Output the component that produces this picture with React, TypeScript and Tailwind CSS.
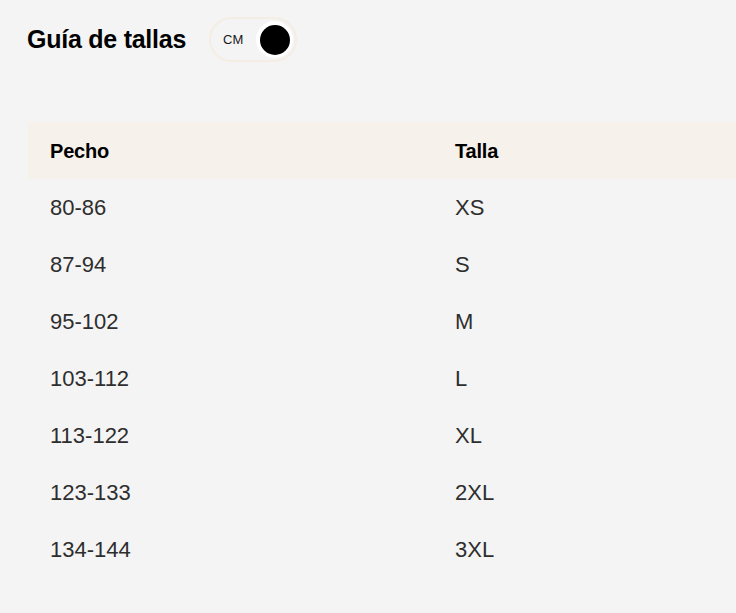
import React from "react";

const rows: [string, string][] = [
  ["80-86", "XS"],
  ["87-94", "S"],
  ["95-102", "M"],
  ["103-112", "L"],
  ["113-122", "XL"],
  ["123-133", "2XL"],
  ["134-144", "3XL"],
];

export default function App() {
  return (
    <div
      className="w-[736px] h-[613px] overflow-hidden bg-[#f4f4f4] pl-[27px] pt-[17px]"
      style={{ fontFamily: '"Liberation Sans", Arial, sans-serif' }}
    >
      <div className="flex items-center gap-[23px]">
        <h1 className="text-[25px] leading-none font-bold tracking-[-0.01em] text-black">
          Guía de tallas
        </h1>
        <div className="flex items-center h-[45px] w-[88px] rounded-full border-2 border-[#f4ede3] pl-[12px] pr-[2px] justify-between">
          <span className="text-[13px] leading-none text-[#1a1a1a]">CM</span>
          <span className="w-[37px] h-[37px] rounded-full bg-white flex items-center justify-center">
            <span className="w-[30px] h-[30px] rounded-full bg-black" />
          </span>
        </div>
      </div>

      <div className="mt-[60px] ml-px w-[854px]">
        <div className="grid grid-cols-2 h-[57px] items-center bg-[#f6f1ea] px-[22px]">
          <div className="text-[20px] font-bold tracking-[-0.01em] text-black">Pecho</div>
          <div className="text-[20px] font-bold tracking-[-0.01em] text-black">Talla</div>
        </div>
        {rows.map(([a, b]) => (
          <div key={a} className="grid grid-cols-2 h-[57px] items-center px-[22px] text-[22px] text-[#2e2e2e]">
            <div>{a}</div>
            <div>{b}</div>
          </div>
        ))}
      </div>
    </div>
  );
}
